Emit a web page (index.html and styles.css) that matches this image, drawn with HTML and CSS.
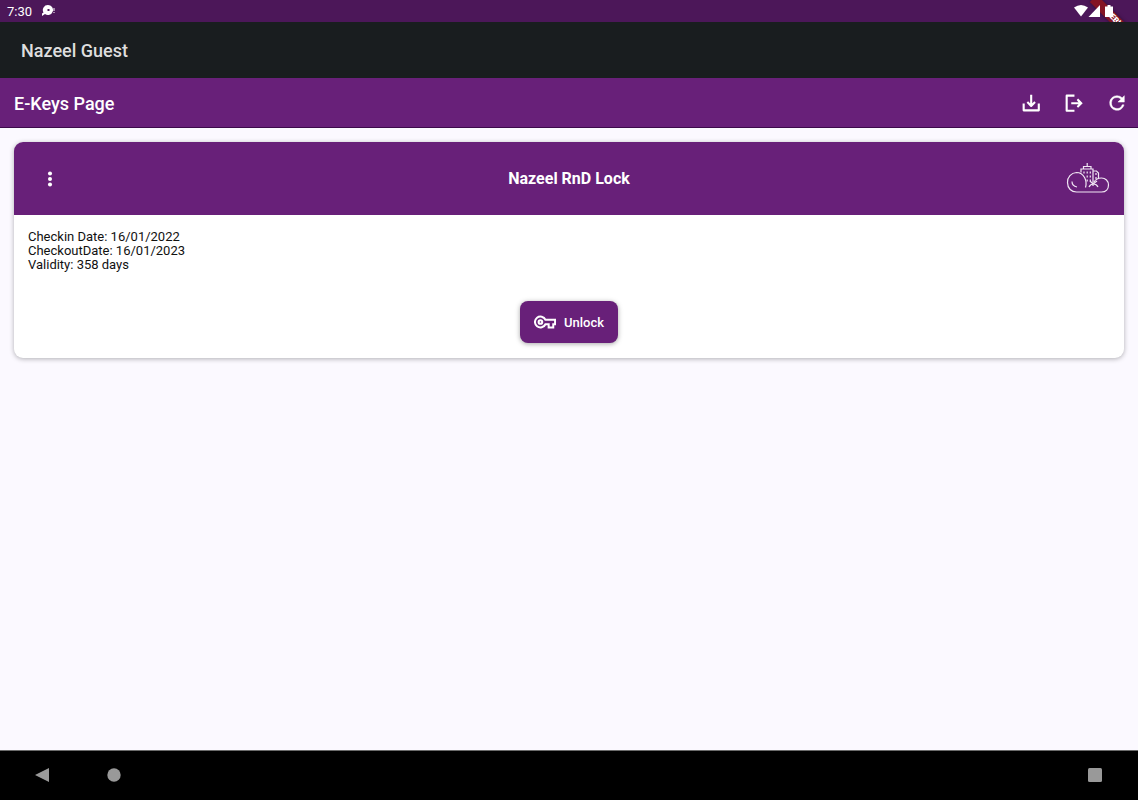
FILE: index.html
```html
<!DOCTYPE html>
<html lang="en">
<head>
    <meta charset="UTF-8">
    <meta name="viewport" content="width=device-width, initial-scale=1.0">
    <title>Nazeel Guest</title>
    <link rel="stylesheet" href="styles.css">
</head>
<body>
    <div class="status-bar">
        <span class="ribbon">DEBUG</span>
        <span class="clock">7:30</span>
        <svg class="notification" width="14" height="14" viewBox="0 0 14 14" fill="#fff">
            <path fill-rule="evenodd" d="M6 1a5 5 0 1 1-3 9L0 12V9.500l1.500-1A5 5 0 0 1 6 1zm-.5 4v2h2V5z"/>
            <path d="M11.500 4h1v3h-1zM11.500 8h1v1h-1z"/>
        </svg>
        <svg class="signals" width="42" height="14" viewBox="0 0 42 14" fill="#fff">
            <path d="M0 3.500Q7-1.500 14 3.500L7 12.500z"/>
            <path d="M26 1v12H14.500z"/>
            <path d="M33.500 1h3v1.500h2.500v10.500h-8V2.500h2.500z"/>
        </svg>
    </div>

    <header class="app-bar">
        <h1>Nazeel Guest</h1>
    </header>

    <div class="page-bar">
        <h2>E-Keys Page</h2>
        <div class="actions">
            <button type="button" aria-label="Download">
                <svg width="22" height="22" viewBox="0 0 24 24" fill="none" stroke="#fff" stroke-width="2.300" stroke-linejoin="round">
                    <path d="M4 12.500V20h16.500v-7.500M12.200 3v12M8 11l4.200 4.200L16.400 11"/>
                </svg>
            </button>
            <button type="button" aria-label="Log out">
                <svg width="22" height="22" viewBox="0 0 24 24" fill="none" stroke="#fff" stroke-width="2.300" stroke-linejoin="round">
                    <path d="M12.500 4H4v16.500h8.500M9 12.200h10"/>
                    <path fill="#fff" stroke="none" d="M16.500 7l5 5.200-5 5-1.500-1.500 2.500-3.500L15 8.600z"/>
                </svg>
            </button>
            <button type="button" aria-label="Refresh">
                <svg width="22" height="22" viewBox="0 0 24 24" fill="#fff" stroke="#fff" stroke-width=".5">
                    <path d="M17.650 6.350A7.960 7.960 0 0 0 12 4a8 8 0 1 0 7.730 10h-2.080A6 6 0 1 1 12 6c1.660 0 3.140.690 4.220 1.780L13 11h7V4z"/>
                </svg>
            </button>
        </div>
    </div>

    <main class="content">
        <section class="card">
            <div class="card-header">
                <button type="button" class="menu" aria-label="More">
                    <svg width="22" height="22" viewBox="0 0 24 24" fill="#fff">
                        <circle cx="12" cy="6" r="2.200"/>
                        <circle cx="12" cy="12" r="2.200"/>
                        <circle cx="12" cy="18" r="2.200"/>
                    </svg>
                </button>
                <h3>Nazeel RnD Lock</h3>
                <svg class="logo" width="44" height="32" viewBox="0 0 44 32" fill="none" stroke="#f0e6f3" stroke-width="1.200">
                    <path d="M19.500 24.500c2-6.500-1.500-15-9-15A9.500 9.500 0 0 0 1.500 19.500c0 6 4 9.500 9 9.500h25c4.500 0 7-3 7-7s-3-7-7-7c-3 0-6 1.500-7.500 4"/>
                    <path d="M6 18.500c0 3 2 5 5 5.500"/>
                    <path d="M15 9.500V6h12V23M17.500 6V3.500h7.500V6M21.200 3.500V0"/>
                    <path d="M27 8h3.500l2 2v5M23 24c1-2 2.500-3 4.500-3s3.500 1 4.500 3M24 18l3 3 4-3"/>
                    <path stroke-dasharray="2 2" d="M18 8.500v3M21.200 8.500v11M24.300 8.500v11M30 10v8"/>
                </svg>
            </div>
            <div class="card-body">
                <p>Checkin Date: 16/01/2022</p>
                <p>CheckoutDate: 16/01/2023</p>
                <p>Validity: 358 days</p>
                <button type="button" class="unlock">
                    <svg width="22" height="22" viewBox="0 0 24 24" fill="none" stroke="#fff" stroke-width="2.200">
                        <path d="M12.500 9.500A6 6 0 1 0 12.500 14.500H16V18h5v-3.500h2v-5z"/>
                        <circle cx="7" cy="12" r="2"/>
                    </svg>
                    Unlock
                </button>
            </div>
        </section>
    </main>

    <nav class="nav-bar">
        <button type="button" aria-label="Back">
            <svg width="16" height="16" viewBox="0 0 16 16" fill="#999"><path d="M15 1v14L1 8z"/></svg>
        </button>
        <button type="button" aria-label="Home">
            <svg width="16" height="16" viewBox="0 0 16 16" fill="#999"><circle cx="8" cy="8" r="6.700"/></svg>
        </button>
        <button type="button" class="recent" aria-label="Recent apps">
            <svg width="16" height="16" viewBox="0 0 16 16" fill="#999"><rect x="1" y="1" width="14" height="14" rx="1.500"/></svg>
        </button>
    </nav>
</body>
</html>
```
FILE: styles.css
```css
* {
    box-sizing: border-box;
}
body {
    margin: 0;
    min-height: 100vh;
    display: flex;
    flex-direction: column;
    font-family: Roboto, Arial, sans-serif;
    background-color: #fbf9ff;
    color: #111;
}
h1, h2, h3, p {
    margin: 0;
    font-weight: 500;
}
button {
    display: flex;
    align-items: center;
    padding: 0;
    border: 0;
    background: none;
    font-family: inherit;
    cursor: pointer;
}
svg {
    display: block;
}

.status-bar {
    position: relative;
    overflow: hidden;
    display: flex;
    align-items: center;
    height: 22px;
    padding: 0 22px 0 7px;
    background-color: #4c1759;
    color: #fff;
}
.clock {
    font-size: 13px;
}
.notification {
    margin-left: 10px;
}
.signals {
    position: relative;
    margin-left: auto;
}
/* corner ribbon, cut off by the bar */
.ribbon {
    position: absolute;
    top: 16px;
    right: -10px;
    width: 64px;
    background-color: #841424;
    box-shadow: 0 0 4px rgba(0,0,0,0.4);
    font-size: 8px;
    font-weight: 900;
    line-height: 10px;
    text-align: center;
    transform: rotate(45deg);
}

.app-bar {
    display: flex;
    align-items: center;
    height: 56px;
    padding: 0 21px;
    background-color: #191d1f;
    color: #dedede;
}
.app-bar h1 {
    font-size: 18px;
}

.page-bar {
    display: flex;
    align-items: center;
    justify-content: space-between;
    height: 50px;
    padding: 1px 10px 0 14px;
    background-color: #682079;
    border-bottom: 1px solid #3c0a4b;
    color: #fff;
}
.page-bar h2 {
    font-size: 18px;
}
.actions {
    display: flex;
    gap: 21px;
}

.content {
    flex: 1;
    padding: 14px;
}
.card {
    border-radius: 9px;
    background-color: #fff;
    box-shadow: 0 1px 5px rgba(0,0,0,0.3);
}
.card-header {
    display: grid;
    grid-template-columns: 44px 1fr 44px;
    align-items: center;
    height: 73px;
    padding: 0 14px;
    border-radius: 9px 9px 0 0;
    background-color: #682079;
    color: #fff;
}
.card-header h3 {
    font-size: 16px;
    font-weight: 700;
    text-align: center;
}
.menu {
    padding-left: 11px;
}
.card-body {
    padding: 15px 14px;
}
.card-body p {
    font-size: 13px;
    font-weight: 400;
    line-height: 14px;
}
.unlock {
    gap: 8px;
    height: 42px;
    margin: 29px auto 0;
    padding: 0 14px;
    border-radius: 8px;
    background-color: #682079;
    box-shadow: 0 1px 5px rgba(0,0,0,0.35);
    color: #fff;
    font-size: 13px;
    font-weight: 500;
}

.nav-bar {
    display: flex;
    align-items: center;
    gap: 56px;
    height: 50px;
    padding: 0 35px 1px 34px;
    border-top: 1px solid #6b6b6b;
    background-color: #000;
}
.recent {
    margin-left: auto;
}
```
